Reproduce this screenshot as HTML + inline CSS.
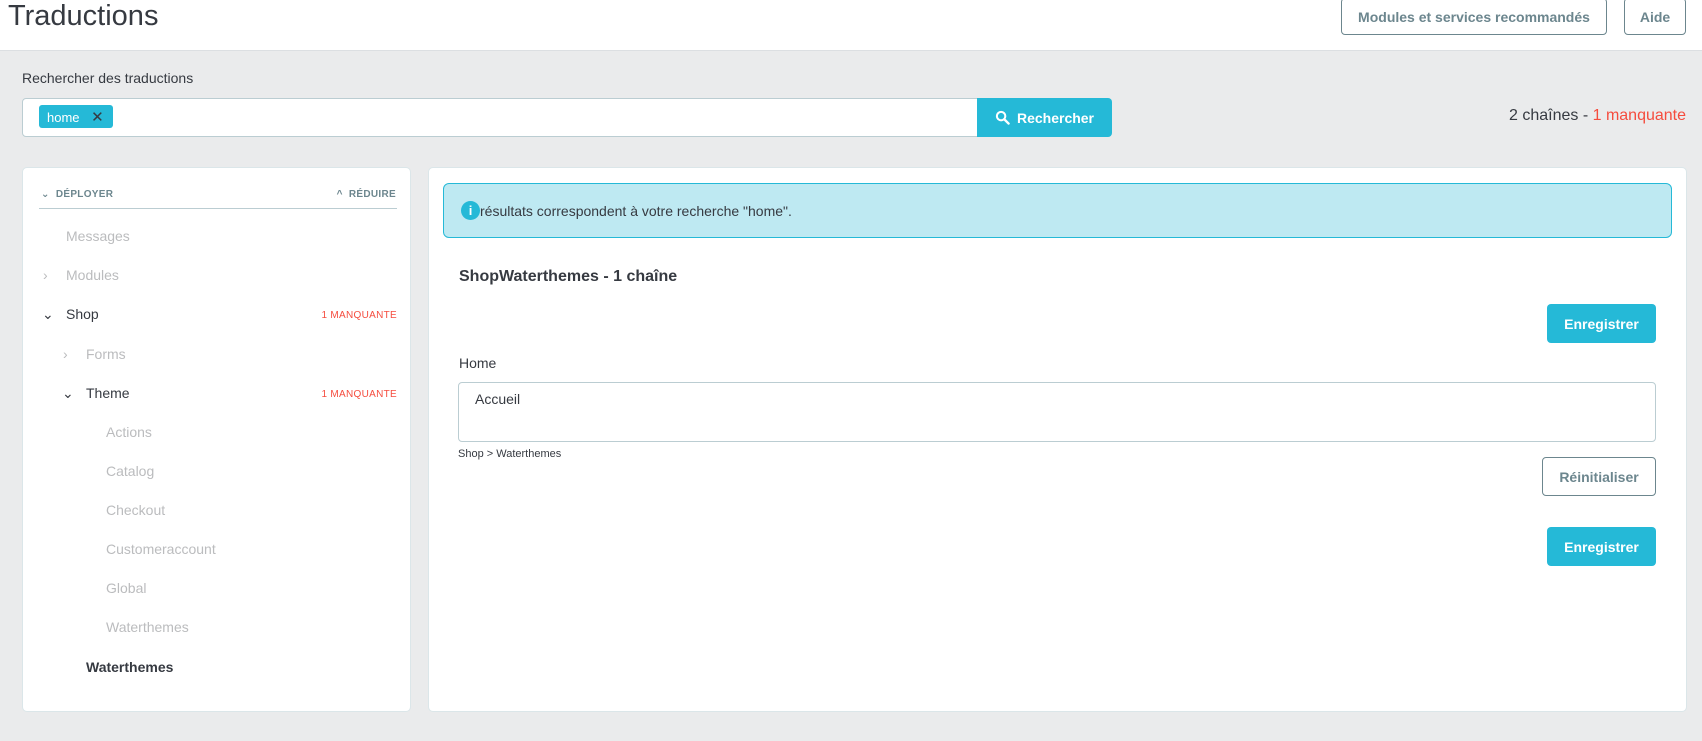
<!DOCTYPE html>
<html><head><meta charset="utf-8"><style>
*{box-sizing:border-box;margin:0;padding:0}
body{width:1702px;height:741px;background:#eaebec;font-family:"Liberation Sans","DejaVu Sans",sans-serif;color:#363a41;position:relative;overflow:hidden}
.a{position:absolute;white-space:nowrap}
.hdr{position:absolute;left:0;top:0;width:1702px;height:51px;background:#fff;border-bottom:1px solid #dcdfe2}
.obtn{position:absolute;border:1px solid #6c868e;border-radius:4px;color:#6c868e;font-weight:bold;font-size:14px;display:flex;align-items:center;justify-content:center;background:#fff}
.bbtn{position:absolute;background:#25b9d7;border-radius:4px;color:#fff;font-weight:bold;font-size:14px;display:flex;align-items:center;justify-content:center}
.card{position:absolute;background:#fff;border:1px solid #dbe6e9;border-radius:5px}
.ti{position:absolute;font-size:14px;color:#bbbcbe}
.miss{position:absolute;right:0;font-size:10px;color:#f54c3e;letter-spacing:.3px}
</style></head><body>
<div class="hdr"></div>
<div class="a" style="left:8px;top:0px;font-size:29px;color:#363a41">Traductions</div>
<div class="obtn" style="left:1341px;top:-2px;width:266px;height:37px">Modules et services recommandés</div>
<div class="obtn" style="left:1624px;top:-2px;width:62px;height:37px">Aide</div>

<div class="a" style="left:22px;top:70px;font-size:14px;color:#363a41">Rechercher des traductions</div>
<div style="position:absolute;left:22px;top:98px;width:956px;height:39px;background:#fff;border:1px solid #bbcdd2;border-radius:4px 0 0 4px"></div>
<div class="a" style="left:39px;top:105px;width:74px;height:23px;background:#25b9d7;border-radius:3px;color:#fff;font-size:13px;padding:3px 0 0 8px">home <span style="color:#363a41;font-size:15px;margin-left:8px">✕</span></div>
<div class="bbtn" style="left:977px;top:98px;width:135px;height:39px;border-radius:0 4px 4px 0">
<svg width="15" height="15" viewBox="0 0 16 16" style="margin-right:7px"><circle cx="6.5" cy="6.5" r="4.5" fill="none" stroke="#fff" stroke-width="2.2"/><path d="M10 10l4.5 4.5" stroke="#fff" stroke-width="2.5" stroke-linecap="round"/></svg>Rechercher</div>
<div class="a" style="right:16px;top:107px;font-size:16px;color:#363a41">2 chaînes - <span style="color:#f54c3e">1 manquante</span></div>

<div class="card" style="left:22px;top:167px;width:389px;height:545px">
 <div class="a" style="left:18px;top:21px;font-size:10px;font-weight:bold;color:#6c868e;letter-spacing:.3px">⌄&nbsp; DÉPLOYER</div>
 <div class="a" style="right:14px;top:21px;font-size:10px;font-weight:bold;color:#6c868e;letter-spacing:.3px">^&nbsp; RÉDUIRE</div>
 <div style="position:absolute;left:16px;top:40px;width:358px;height:1px;background:#bbcdd2"></div>
 <div style="position:absolute;left:0;top:0;width:374px">
 <div class="ti" style="left:43px;top:60px">Messages</div>
 <div class="ti" style="left:20px;top:99px">›</div><div class="ti" style="left:43px;top:99px">Modules</div>
 <div class="ti" style="left:19px;top:138px;color:#363a41">⌄</div><div class="ti" style="left:43px;top:138px;color:#363a41">Shop</div><div class="miss" style="top:142px">1 MANQUANTE</div>
 <div class="ti" style="left:40px;top:178px">›</div><div class="ti" style="left:63px;top:178px">Forms</div>
 <div class="ti" style="left:39px;top:217px;color:#363a41">⌄</div><div class="ti" style="left:63px;top:217px;color:#363a41">Theme</div><div class="miss" style="top:221px">1 MANQUANTE</div>
 <div class="ti" style="left:83px;top:256px">Actions</div>
 <div class="ti" style="left:83px;top:295px">Catalog</div>
 <div class="ti" style="left:83px;top:334px">Checkout</div>
 <div class="ti" style="left:83px;top:373px">Customeraccount</div>
 <div class="ti" style="left:83px;top:412px">Global</div>
 <div class="ti" style="left:83px;top:451px">Waterthemes</div>
 <div class="ti" style="left:63px;top:491px;color:#363a41;font-weight:bold">Waterthemes</div>
 </div>
</div>

<div class="card" style="left:428px;top:167px;width:1259px;height:545px"></div>
<div style="position:absolute;left:443px;top:183px;width:1229px;height:55px;background:#bee9f2;border:1px solid #25b9d7;border-radius:6px"></div>
<div style="position:absolute;left:461px;top:201px;width:19px;height:19px;border-radius:50%;background:#25b9d7;color:#fff;font-size:13px;font-weight:bold;text-align:center;line-height:19px">i</div>
<div class="a" style="left:480px;top:203px;font-size:14px;color:#363a41">résultats correspondent à votre recherche "home".</div>
<div class="a" style="left:459px;top:268px;font-size:16px;font-weight:bold">ShopWaterthemes - 1 chaîne</div>
<div class="bbtn" style="left:1547px;top:304px;width:109px;height:39px">Enregistrer</div>
<div class="a" style="left:459px;top:355px;font-size:14px">Home</div>
<div style="position:absolute;left:458px;top:382px;width:1198px;height:60px;border:1px solid #bbcdd2;border-radius:4px;background:#fff"></div>
<div class="a" style="left:475px;top:391px;font-size:14px">Accueil</div>
<div class="a" style="left:458px;top:448px;font-size:11px">Shop &gt; Waterthemes</div>
<div class="obtn" style="left:1542px;top:457px;width:114px;height:39px">Réinitialiser</div>
<div class="bbtn" style="left:1547px;top:527px;width:109px;height:39px">Enregistrer</div>
</body></html>
